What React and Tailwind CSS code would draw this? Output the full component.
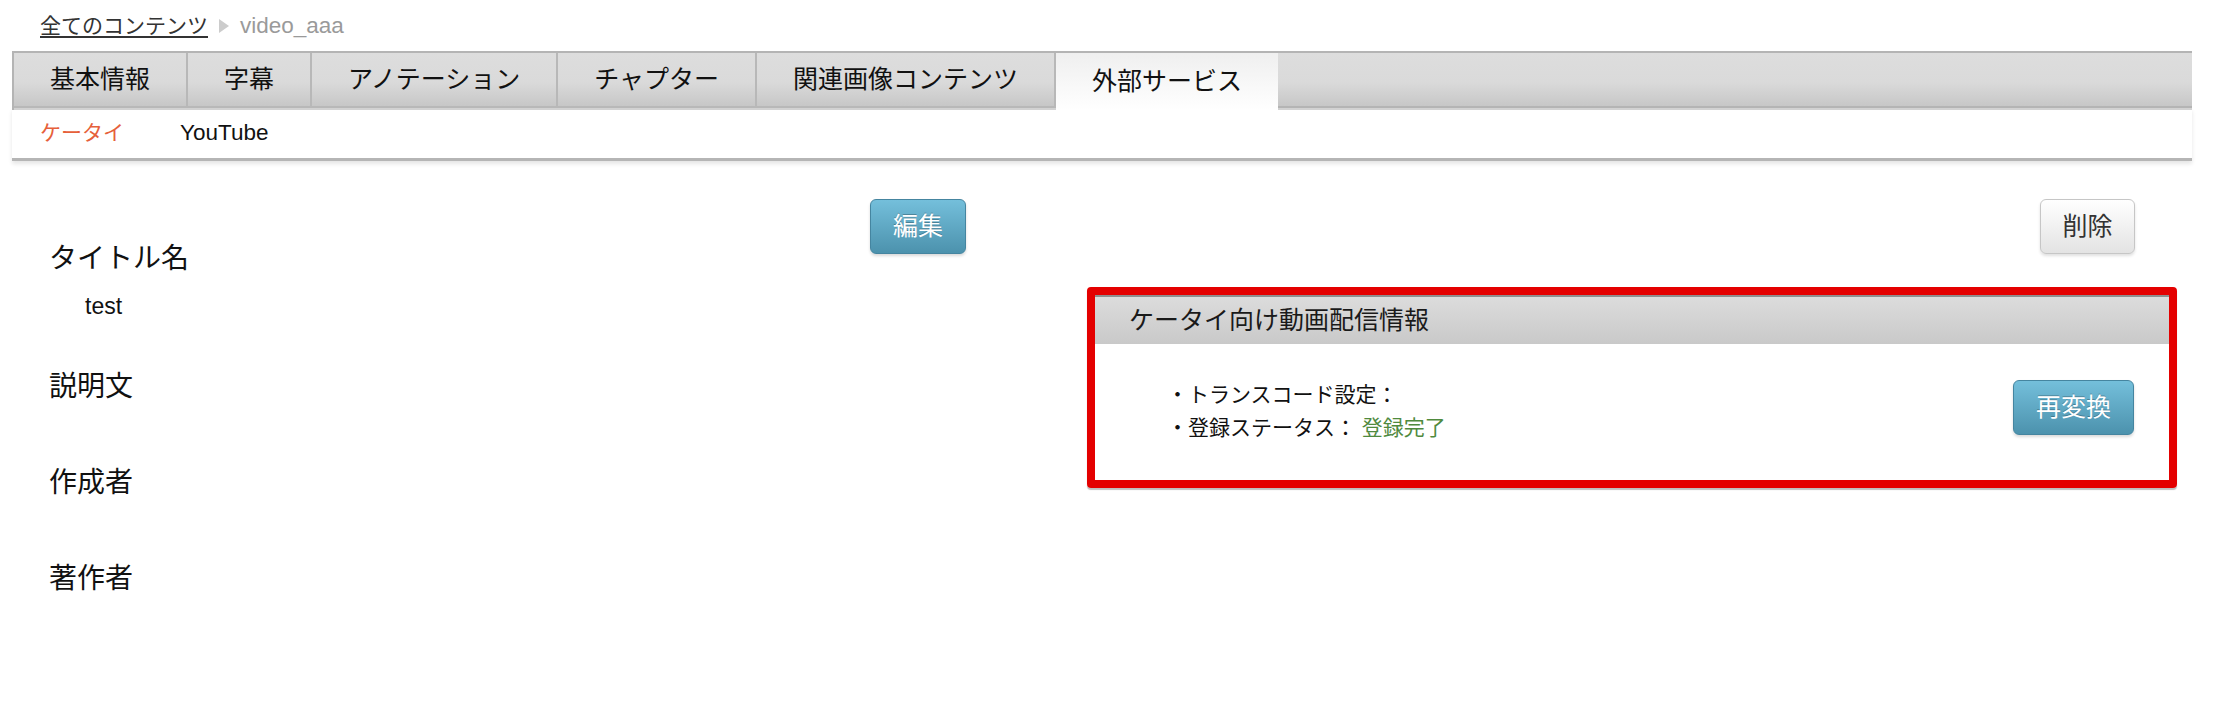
import React from "react";

const tabs = [
  { label: "基本情報" },
  { label: "字幕" },
  { label: "アノテーション" },
  { label: "チャプター" },
  { label: "関連画像コンテンツ" },
  { label: "外部サービス", active: true },
];

const fields = [
  { label: "タイトル名", value: "test" },
  { label: "説明文", value: "" },
  { label: "作成者", value: "" },
  { label: "著作者", value: "" },
];

const BlueButton = ({ children, className }) => (
  <button
    className={
      "h-[55px] rounded-[6px] border border-[#4585a0] bg-[linear-gradient(to_bottom,#74bfdb,#4c92ad)] text-[25px] text-white [text-shadow:0_-1px_0_rgba(0,0,0,0.25)] shadow-[0_2px_3px_rgba(0,0,0,0.15)] " +
      className
    }
  >
    {children}
  </button>
);

const Tab = ({ label, active }) => {
  if (active) {
    return (
      <div className="flex h-[57px] items-center bg-[linear-gradient(to_bottom,#efefef,#ffffff)] px-[36px] text-[25px] text-[#111]">
        {label}
      </div>
    );
  }
  return (
    <div className="flex h-[55px] items-center border-r-2 border-b-2 border-[#b8b8b8] bg-[linear-gradient(to_bottom,#dddddd_0%,#dadada_55%,#c7c7c7_100%)] px-[36px] text-[25px] text-[#111] shadow-[0_2px_0_#d2d2d2]">
      {label}
    </div>
  );
};

export default function App() {
  return (
    <div className="min-h-[712px] bg-white font-['Liberation_Sans','Noto_Sans_CJK_JP',sans-serif] text-[#111]">
      {/* breadcrumb */}
      <div className="flex h-[51px] items-center pl-[40px] text-[21px]">
        <a className="text-[#333] underline underline-offset-[3px]">全てのコンテンツ</a>
        <svg className="mx-[11px]" width="10" height="14" viewBox="0 0 10 14">
          <polygon points="0,0 10,7 0,14" fill="#cccccc" />
        </svg>
        <span className="text-[22.5px] text-[#9a9a9a]">video_aaa</span>
      </div>

      <div className="ml-[12px] mr-[22px]">
        {/* tabs */}
        <div className="flex h-[59px] items-start border-t-2 border-l-2 border-[#b4b4b4]">
          {tabs.map((t) => (
            <Tab key={t.label} label={t.label} active={t.active} />
          ))}
          <div className="h-[55px] flex-1 border-b-2 border-[#b4b4b4] bg-[linear-gradient(to_bottom,#dddddd_0%,#dadada_55%,#c7c7c7_100%)] shadow-[0_2px_0_#d2d2d2]" />
        </div>

        {/* sub tabs */}
        <div className="-mt-[2px] flex h-[53px] items-center border-b-[3px] border-[#b5b5b5] text-[21px] shadow-[0_3px_4px_rgba(0,0,0,0.1)]">
          <span className="px-[28px] text-[#e6603a]">ケータイ</span>
          <span className="px-[28px] text-[22.5px] text-[#111]">YouTube</span>
        </div>

        {/* content */}
        <div className="flex pt-[38px] pl-[37px]">
          <div className="flex w-[917px] items-start justify-between">
            <dl className="mt-[40px]">
              {fields.map((f) => (
                <div key={f.label}>
                  <dt className="text-[28px] leading-[40px]">{f.label}</dt>
                  <dd className="pt-[11px] pb-[45px] pl-[36px] text-[23px] leading-[32px]">
                    {f.value}
                  </dd>
                </div>
              ))}
            </dl>
            <BlueButton className="w-[96px]">編集</BlueButton>
          </div>

          <div className="ml-[121px] w-[1090px]">
            <div className="flex justify-end pr-[42px]">
              <button className="h-[55px] w-[95px] rounded-[6px] border border-[#c6c6c6] bg-[linear-gradient(to_bottom,#ffffff,#e3e3e3)] text-[25px] text-[#333] shadow-[0_2px_3px_rgba(0,0,0,0.12)]">
                削除
              </button>
            </div>

            <div className="mt-[33px] rounded-[4px] border-[8px] border-[#e40000] shadow-[0_2px_1px_rgba(0,0,0,0.25)]">
              <div className="flex h-[49px] items-center border-t-2 border-[#8e8e8e] bg-[linear-gradient(to_bottom,#dcdcdc,#c9c9c9)] pl-[34px] text-[25px] text-[#1a1a1a]">
                ケータイ向け動画配信情報
              </div>
              <div className="flex h-[136px] items-start justify-between pt-[36px] pr-[35px] pl-[72px]">
                <ul className="-mt-[2px] text-[21px] leading-[33px] text-[#111]">
                  <li>・トランスコード設定：</li>
                  <li>
                    ・登録ステータス：{" "}
                    <span className="text-[#4f8a3e]">登録完了</span>
                  </li>
                </ul>
                <BlueButton className="h-[54px] w-[121px]">再変換</BlueButton>
              </div>
            </div>
          </div>
        </div>
      </div>
    </div>
  );
}
